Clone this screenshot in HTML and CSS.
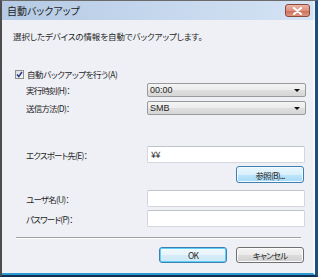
FILE: index.html
```html
<!DOCTYPE html>
<html lang="ja">
<head>
<meta charset="utf-8">
<link rel="stylesheet" href="styles.css">
</head>
<body>
<div class="window">
  <div class="titlebar">
    <span class="title">自動バックアップ</span>
    <div class="close">
      <svg width="11" height="8" viewBox="0 0 11 8"><path d="M2 1 L9 7 M9 1 L2 7" stroke="#fff" stroke-width="2.2" stroke-linecap="round"/></svg>
    </div>
  </div>
  <div class="body">
    <p class="desc">選択したデバイスの情報を自動でバックアップします。</p>
    <div class="check">
      <span class="box"><svg width="7" height="7" viewBox="0 0 7 7"><path d="M1 3.5 L2.8 5.5 L6 1" stroke="#2a3f8c" stroke-width="1.5" fill="none"/></svg></span>
      <span class="txt">自動バックアップを行う(A)</span>
    </div>
    <div class="row r1"><span class="lbl">実行時刻(H)：</span><div class="combo"><span>00:00</span><span class="arrow"></span></div></div>
    <div class="row r2"><span class="lbl">送信方法(D)：</span><div class="combo"><span>SMB</span><span class="arrow"></span></div></div>
    <div class="row r3"><span class="lbl">エクスポート先(E)：</span><div class="input">¥¥</div></div>
    <div class="browse-row"><div class="btn btn-hot">参照(B)...</div></div>
    <div class="row r4"><span class="lbl">ユーザ名(U)：</span><div class="input"></div></div>
    <div class="row r5"><span class="lbl">パスワード(P)：</span><div class="input"></div></div>
    <div class="sep"></div>
    <div class="actions">
      <div class="btn btn-default">OK</div>
      <div class="btn btn-normal">キャンセル</div>
    </div>
  </div>
</div>
</body>
</html>
```
FILE: styles.css
```css
* { box-sizing: border-box; }
html, body { margin: 0; padding: 0; }
body {
  width: 318px;
  height: 277px;
  overflow: hidden;
  font-family: "Noto Sans CJK JP", "Noto Sans", sans-serif;
  font-feature-settings: "palt";
  font-size: 8.5px;
  letter-spacing: -0.8px;
  color: #262626;
}
.window {
  width: 318px;
  height: 277px;
  display: flex;
  flex-direction: column;
  border-left: 2px solid #4d4d4d;
  border-top: 1px solid #6b6b6b;
  border-right: 3px solid #1f4f7e;
  border-bottom: 2px solid #0f2f55;
  background: #eef0f5;
}
.titlebar {
  height: 19px;
  flex: none;
  display: flex;
  align-items: center;
  justify-content: space-between;
  padding-left: 5px;
  padding-right: 3px;
  background: linear-gradient(to right, #b5cae4 0%, #c5d7ed 50%, #d4e3f4 100%);
  border-right: 2px solid #e6eef8;
}
.title { font-size: 10px; letter-spacing: 0; color: #1e1e1e; }
.close {
  width: 25px;
  height: 13px;
  border: 1px solid #8a4a3e;
  border-radius: 3px;
  background: linear-gradient(to bottom, #ecb4a6 0%, #dd9180 50%, #cf6f5a 55%, #dd957f 100%);
  display: flex;
  align-items: center;
  justify-content: center;
}
.body {
  flex: 1;
  display: flex;
  flex-direction: column;
  border-right: 2px solid #f6f8fb;
  border-bottom: 2px solid #2e9ad2;
}
.desc {
  margin: 9px 0 0 11px;
  line-height: 14px;
  height: 14px;
  letter-spacing: -0.1px;
}
.check {
  margin: 24px 0 0 13px;
  height: 14px;
  line-height: 14px;
  display: flex;
  align-items: center;
  gap: 3px;
}
.txt { letter-spacing: -0.4px; }
.box {
  width: 9px;
  height: 9px;
  border: 1px solid #8e8f8f;
  background: linear-gradient(to bottom right, #dcdcdc, #fafafa);
  display: flex;
  align-items: center;
  justify-content: center;
}
.row {
  display: flex;
  align-items: center;
  padding-left: 24px;
}
.lbl { width: 121px; flex: none; }
.r1 { margin-top: 2px; }
.r2 { margin-top: 4px; }
.r3 { margin-top: 31px; }
.r4 { margin-top: 7px; }
.r5 { margin-top: 3px; }
.combo {
  width: 159px;
  height: 14px;
  border: 1px solid #9a9a9a;
  border-radius: 2px;
  background: linear-gradient(to bottom, #f4f4f4 0%, #ececec 50%, #dfdfdf 51%, #d6d6d6 100%);
  display: flex;
  align-items: center;
  justify-content: space-between;
  padding: 0 3px 0 2px;
  font-family: "Liberation Sans", sans-serif;
  font-size: 9px;
  letter-spacing: 0;
}
.arrow {
  width: 0;
  height: 0;
  border-left: 3px solid transparent;
  border-right: 3px solid transparent;
  border-top: 3px solid #111;
  margin-right: 2px;
}
.input {
  width: 158px;
  height: 17px;
  background: #fff;
  border: 1px solid #d3d6dc;
  border-top-color: #c0c3ca;
  border-radius: 2px;
  padding-left: 3px;
  line-height: 15px;
  font-size: 9px;
  letter-spacing: -0.5px;
}
.browse-row {
  display: flex;
  justify-content: flex-end;
  padding-right: 9px;
  margin-top: 3px;
}
.btn {
  width: 68px;
  height: 17px;
  border-radius: 3px;
  display: flex;
  align-items: center;
  justify-content: center;
}
.btn-hot {
  border: 1px solid #3c7fb1;
  background: linear-gradient(to bottom, #eaf6fd 0%, #d9f0fc 50%, #bee6fd 51%, #a7d9f5 100%);
  box-shadow: inset 0 0 0 1px #f4fbff;
}
.sep {
  margin: 10px 12px 0 14px;
  height: 2px;
  border-top: 1px solid #a0a0a0;
  border-bottom: 1px solid #ffffff;
}
.actions {
  display: flex;
  justify-content: flex-end;
  gap: 9px;
  padding-right: 9px;
  margin-top: 8px;
}
.btn-default {
  height: 16px;
  border: 1px solid #3c7fb1;
  background: linear-gradient(to bottom, #f2f9fd 0%, #e6f3fb 50%, #d6ecf8 51%, #cfe7f5 100%);
  box-shadow: inset 0 0 0 1px #5fd0f5;
}
.btn-normal {
  height: 16px;
  border: 1px solid #707070;
  background: linear-gradient(to bottom, #f2f2f2 0%, #ebebeb 50%, #dddddd 51%, #cfcfcf 100%);
  box-shadow: inset 0 0 0 1px #fcfcfc;
}
```
